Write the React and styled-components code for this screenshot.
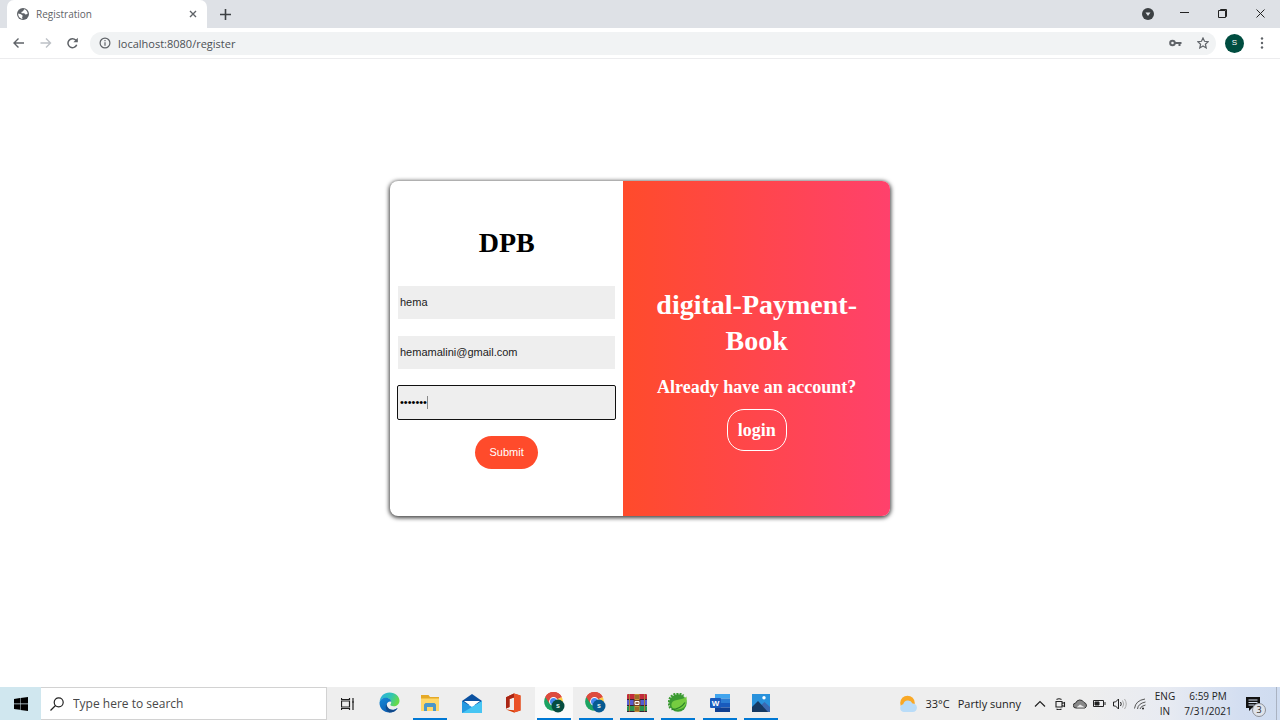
import React from "react";
import styled, { createGlobalStyle, css } from "styled-components";

const GlobalStyle = createGlobalStyle`
  *, *::before, *::after { box-sizing: border-box; }
  body { margin: 0; background: #fff; }
  button, input { font: inherit; color: inherit; }
  button { padding: 0; border: 0; background: none; }
  svg { display: block; flex: none; }
`;

const ui = `"Segoe UI", "Open Sans", "Noto Sans", sans-serif`;
const serif = `"Palatino Linotype", Palatino, "Liberation Serif", serif`;
const sans = `Arial, "Liberation Sans", sans-serif`;

const Screen = styled.div`
  display: flex;
  flex-direction: column;
  min-height: 100vh;
  font-family: ${ui};
`;

/* Browser chrome */
const TabStrip = styled.header`
  display: flex;
  align-items: stretch;
  height: 28px;
  padding-left: 7px;
  background: #dee1e6;
  color: #3c4043;
`;
const Tab = styled.div`
  display: flex;
  align-items: center;
  width: 200px;
  padding: 0 9px 0 10px;
  gap: 7px;
  border-radius: 7px 7px 0 0;
  background: #fff;
  font-size: 10px;
  color: #5f6368;
`;
const TabTitle = styled.span`
  flex: 1;
`;
const IconButton = styled.button`
  display: grid;
  place-items: center;
  width: ${(p) => p.$w || 27}px;
  color: ${(p) => p.$color || "inherit"};
`;
const WindowControls = styled.div`
  display: flex;
  margin-left: auto;
`;
const Toolbar = styled.nav`
  display: flex;
  align-items: center;
  height: 31px;
  padding: 0 5px;
  border-bottom: 1px solid #ececee;
  color: #5f6368;
`;
const AddressBar = styled.div`
  display: flex;
  flex: 1;
  align-items: center;
  height: 23px;
  margin: 0 5px 0 4px;
  padding-left: 9px;
  border-radius: 12px;
  background: #f1f3f4;
`;
const AddressInput = styled.input`
  flex: 1;
  min-width: 0;
  padding: 0 0 0 7px;
  border: 0;
  outline: 0;
  background: none;
  font-size: 11px;
  color: #4c5054;
`;
const Avatar = styled.span`
  display: grid;
  place-items: center;
  width: 19px;
  height: 19px;
  border-radius: 50%;
  background: #004d40;
  color: #fff;
  font: 8px/1 ${sans};
`;

/* Registration page */
const Page = styled.main`
  display: flex;
  flex: 1;
  align-items: flex-start;
  justify-content: center;
  padding: 122px 16px 32px;
`;
const Card = styled.section`
  display: grid;
  grid-template-columns: 7fr 8fr;
  width: 100%;
  max-width: 500px;
  min-height: 335px;
  overflow: hidden;
  border-radius: 8px;
  background: #fff;
  box-shadow: 0 1px 4px 1px rgba(0, 0, 0, 0.75);
`;
const Form = styled.form`
  display: flex;
  flex-direction: column;
  align-items: center;
  gap: 17px;
  padding: 44px 8px;
  font: 11px/13px ${sans};
`;
const Heading = styled.h1`
  margin: 0;
  font: bold 28px/36px ${serif};
`;
const Brand = styled(Heading)`
  padding-bottom: 8px;
  color: #000;
`;
const Field = styled.div`
  position: relative;
  width: 100%;
`;
const TextInput = styled.input`
  display: block;
  width: 100%;
  height: 33px;
  padding: 0 2px 2px;
  border: 0;
  background: #eee;
  color: #222;
  outline: none;
  ${(p) =>
    p.$active &&
    css`
      border-radius: 1px;
      outline: 1px solid #101010;
      color: #000;
    `}
`;
const Caret = styled.i`
  position: absolute;
  top: 10px;
  left: 29px;
  width: 1px;
  height: 13px;
  background: #888;
`;
const Submit = styled.button`
  width: 63px;
  height: 33px;
  border-radius: 17px;
  background: #ff4b2b;
  color: #fff;
`;
const Welcome = styled.aside`
  display: flex;
  flex-direction: column;
  align-items: center;
  padding: 106px 24px 32px;
  background: linear-gradient(to right, #ff4b2b, #ff416c);
  color: #fff;
  text-align: center;
`;
const Question = styled.p`
  margin: 16px 0 10px;
  font: bold 18px/24px ${serif};
  white-space: nowrap;
`;
const LoginLink = styled.a`
  padding: 8px 10px;
  border: 1px solid #fff;
  border-radius: 17px;
  color: inherit;
  font: bold 18px/24px ${serif};
  text-decoration: none;
`;

/* Taskbar */
const Taskbar = styled.footer`
  display: flex;
  align-items: stretch;
  height: 33px;
  background: linear-gradient(to right, #eee 85%, #e8ebf2 91%, #d3def1 97%, #cfdcf0);
  color: #222;
`;
const Start = styled.button`
  display: grid;
  place-items: center;
  width: 41px;
  background: #d0e7ef;
`;
const Search = styled.label`
  display: flex;
  align-items: center;
  gap: 9px;
  width: 286px;
  padding-left: 9px;
  border: 1px solid #d2d2d2;
  border-left: 0;
  background: #fff;
`;
const SearchInput = styled.input`
  flex: 1;
  min-width: 0;
  padding: 0;
  border: 0;
  outline: 0;
  background: none;
  font-size: 12px;
  &::placeholder { color: #484848; opacity: 1; }
`;
const Apps = styled.div`
  display: flex;
  justify-content: space-between;
  width: 406px;
  margin-left: 4px;
`;
const AppButton = styled.button`
  display: grid;
  place-items: center;
  width: 34px;
  border-bottom: 2px solid ${(p) => (p.$open ? "#0078d4" : "transparent")};
  background: ${(p) => (p.$active ? "#fafafa" : "none")};
  box-shadow: ${(p) => (p.$active ? "2px 0 #fafafa, -2px 0 #fafafa" : "none")};
`;
const Tray = styled.div`
  display: flex;
  align-items: center;
  margin-left: auto;
`;
const Weather = styled.button`
  display: flex;
  align-items: center;
  gap: 8px;
  margin-right: 10px;
  font-size: 11px;
  white-space: nowrap;
`;
const TrayIcons = styled.div`
  display: flex;
  align-items: center;
`;
const Stack = styled.div`
  display: flex;
  flex-direction: column;
  align-items: center;
  width: ${(p) => p.$w}px;
  font-size: 10px;
  line-height: 15px;
  white-space: nowrap;
`;
const Notices = styled.button`
  position: relative;
  display: grid;
  place-items: center;
  width: 40px;
  height: 33px;
  padding-right: 6px;
`;
const Count = styled.span`
  position: absolute;
  left: 16px;
  top: 16px;
  width: 14px;
  height: 14px;
  border: 1px solid #8d9097;
  border-radius: 50%;
  background: #dfe3ea;
  font-size: 9px;
  line-height: 12px;
`;
const ShowDesktop = styled.button`
  align-self: stretch;
  width: 4px;
  border-left: 1px solid #aab3c2;
`;

const Line = ({ s = 12, w = 1, children }) => (
  <svg width={s} height={s} viewBox={`0 0 ${s} ${s}`} fill="none" stroke="currentColor" strokeWidth={w} aria-hidden="true">
    {children}
  </svg>
);

const Globe = () => (
  <svg width="12" height="12" viewBox="0 0 12 12" aria-hidden="true">
    <circle cx="6" cy="6" r="6" fill="#5f6368" />
    <path d="M1.200 5.500 4 6.300l1.800 1.500-.7 1.400.4 1.700C3 10.600 1 8.500 1.200 5.500ZM7.200 1.300 6 3.200 4.300 3.900l.4 1.300h2.500l1.200 1.300 2.200-.6c.2-2.300-1.500-4.100-3.400-4.600Z" fill="#fff" />
  </svg>
);

const Chrome = ({ badge }) => (
  <svg width="21" height="21" viewBox="0 0 21 21" aria-hidden="true">
    <path d="M9.500 9.500 1.300 5A9.300 9.300 0 0 1 17.700 5Z" fill="#dd4b3e" />
    <path d="M9.500 9.500 1.300 5A9.300 9.300 0 0 0 9.500 18.800Z" fill="#1da362" />
    <path d="M9.500 9.500 17.700 5A9.300 9.300 0 0 1 9.500 18.800Z" fill="#ffcd46" />
    <path d="M9.500 5.300h8.400L17.700 5A9.300 9.300 0 0 0 1.300 5L5.500 11.800Z" fill="#dd4b3e" />
    <circle cx="9.500" cy="9.500" r="4.400" fill="#fff" />
    <circle cx="9.500" cy="9.500" r="3.500" fill="#4688f1" />
    <circle cx="14" cy="14" r="6.500" fill={badge} />
    <text x="14" y="16.300" textAnchor="middle" fontSize="7" fontWeight="bold" fontFamily="Liberation Sans, sans-serif" fill="#dcecea">s</text>
  </svg>
);

const Edge = () => (
  <svg width="21" height="21" viewBox="0 0 21 21" aria-hidden="true">
    <defs>
      <linearGradient id="edgeTop" x1="0" x2="1" y2=".4"><stop stopColor="#2aaee5" /><stop offset=".6" stopColor="#32c5b1" /><stop offset="1" stopColor="#66d94c" /></linearGradient>
      <linearGradient id="edgeBase" x2=".7" y2="1"><stop stopColor="#1589d8" /><stop offset="1" stopColor="#0c58ac" /></linearGradient>
    </defs>
    <path d="M.6 10C1 4 5.200.4 10.500.4c6 0 10 4 10 8.300 0 3.400-2.800 5.600-5.800 5.600-2.400 0-3.400-.8-3.400-1.500 0-.6.900-1 .9-2.600C12.200 7.500 9.500 6 6.500 6 3.200 6 1 8 .6 10Z" fill="url(#edgeTop)" />
    <path d="M.5 10.500C1 7.700 3.500 5.800 6.700 5.800c3.200 0 5.500 1.900 5.500 4.200-1.500-1.200-4.600.5-4.600 3.500 0 3.300 3.700 5.200 7 4.400 1.700-.4 3-1.100 4-1.900-1.700 3-4.700 4.500-8.200 4.500C4.700 20.500.3 16.300.5 10.500Z" fill="url(#edgeBase)" />
    <path d="M7.600 12c.2 3.500 3.500 6.700 8.200 5.400l2.900-1.500c-1.900 3-4.700 4.600-8.300 4.600-3.500-1.500-4.600-5.400-2.800-8.500Z" fill="#114a8b" />
  </svg>
);

const Folder = () => (
  <svg width="20" height="20" viewBox="0 0 20 20" aria-hidden="true">
    <path d="M1 2h7.500l1.500 2h9v13H1Z" fill="#e5a927" />
    <path d="M1 5.500h18V18H1Z" fill="#ffd869" />
    <path d="M4 11.500 5.500 10h9l1.500 1.500V18h-3v-4H7v4H4Z" fill="#4c97c8" />
  </svg>
);

const Mail = () => (
  <svg width="20" height="20" viewBox="0 0 20 20" aria-hidden="true">
    <path d="m0 8 10-7 10 7v4H0Z" fill="#0b51a0" />
    <path d="M2 8h16l-8 6Z" fill="#fff" />
    <path d="m0 8 10 6 10-6v12H0Z" fill="#2599e1" />
    <path d="M20 8v12H0Z" fill="#46c5f3" />
  </svg>
);

const Office = () => (
  <svg width="20" height="20" viewBox="0 0 20 20" aria-hidden="true">
    <path d="M3 4.300 11 .5l6.500 2v15L11 19.500l-8-3 8 .7V4.500L6.500 6v8L3 15.500Z" fill="#d83b01" />
    <path d="m11 .5 6.500 2v15l-6.500 2Z" fill="#ea5228" />
    <path d="M3 4.300 11 .5v4L6.500 6v8L3 15.500Z" fill="#a92515" />
  </svg>
);

const Archive = () => (
  <svg width="22" height="20" viewBox="0 0 22 20" aria-hidden="true">
    <rect x="1" y="1" width="20" height="6" rx="1" fill="#c22b3c" />
    <rect x="1" y="7" width="20" height="6" fill="#565bd0" />
    <rect x="1" y="13" width="20" height="6" rx="1" fill="#2a9550" />
    <path d="M1 6.500h20M1 12.500h20M1 18.500h20" stroke="#3b2033" />
    <path d="M3.500 1v17.500M18.500 1v17.500" stroke="#ae7c39" />
    <path d="M8.500 1h5v18h-5Z" fill="#c89437" />
    <path d="M7.500 7h7v6h-7Z" fill="#714127" />
    <path d="M9 8.500h4v3H9Z" fill="#9b6745" stroke="#fff" />
    <path d="M9 3h4M9 5h4M9 15h4M9 17h4" stroke="#70451d" />
  </svg>
);

const Spring = () => (
  <svg width="20" height="20" viewBox="0 0 20 20" aria-hidden="true">
    <circle cx="10" cy="10" r="8.700" fill="#3b9a32" />
    <path d="M2.500 15A9 9 0 0 1 15.500 2.800" fill="none" stroke="#3b9a32" strokeWidth="2.500" strokeDasharray="2 1" />
    <path d="M18.500 3.500c.7 7-1 12.500-8.500 13-5 .2-7.500-3-6.300-6.300C5.500 5.500 14 8 18.500 3.500Z" fill="#75cc40" />
    <path d="M3.500 16.500c6-.2 10.500-2.500 13.500-7" stroke="#2b8228" strokeWidth="1.300" fill="none" />
  </svg>
);

const Word = () => (
  <svg width="20" height="20" viewBox="0 0 20 20" aria-hidden="true">
    <path d="M5 1h15v4.500H5Z" fill="#41a5ee" /><path d="M5 5.500h15V10H5Z" fill="#2b7cd3" />
    <path d="M5 10h15v4.500H5Z" fill="#185abd" /><path d="M5 14.500h15V19H5Z" fill="#103f91" />
    <rect y="5" width="11" height="10" rx="1" fill="#185abd" />
    <text x="5.500" y="13" textAnchor="middle" fontWeight="bold" fontSize="8" fontFamily="Liberation Sans, sans-serif" fill="#fff">W</text>
  </svg>
);

const Photos = () => (
  <svg width="20" height="20" viewBox="0 0 20 20" aria-hidden="true">
    <path d="M1 1h18v18H1Z" fill="#2992dc" />
    <path d="m8 14 5.500-5 5.500 5v5H8Z" fill="#3b6ab2" />
    <path d="m1 14 6-6 10 11H1Z" fill="#153963" />
    <circle cx="13" cy="4.800" r="1.700" fill="#fff" />
  </svg>
);

const apps = [
  { name: "Edge", Icon: Edge },
  { name: "File Explorer", Icon: Folder, open: true },
  { name: "Mail", Icon: Mail },
  { name: "Office", Icon: Office },
  { name: "Chrome", Icon: () => <Chrome badge="#064d40" />, open: true, active: true },
  { name: "Chrome second profile", Icon: () => <Chrome badge="#075a91" />, open: true },
  { name: "WinRAR", Icon: Archive, open: true },
  { name: "Spring Tools", Icon: Spring, open: true },
  { name: "Word", Icon: Word, open: true },
  { name: "Photos", Icon: Photos, open: true },
];

const BrowserChrome = () => (
  <>
    <TabStrip>
      <Tab>
        <Globe />
        <TabTitle>Registration</TabTitle>
        <IconButton $w={10} aria-label="Close tab"><Line s={8} w={1.4}><path d="m1 1 6 6M7 1 1 7" /></Line></IconButton>
      </Tab>
      <IconButton $w={36} aria-label="New tab"><Line s={11} w={1.6}><path d="M5.500 0v11M0 5.500h11" /></Line></IconButton>
      <WindowControls>
        <IconButton $w={36} aria-label="Search tabs">
          <svg width="12" height="12" viewBox="0 0 12 12" aria-hidden="true"><circle cx="6" cy="6" r="6" fill="#3c4043" /><path d="M3.500 4.500h5L6 8Z" fill="#dee1e6" /></svg>
        </IconButton>
        <IconButton $w={38} $color="#222" aria-label="Minimize"><Line s={10}><path d="M0 3.500h9" /></Line></IconButton>
        <IconButton $w={38} $color="#222" aria-label="Restore"><Line s={10}><path d="M.5 1.500h7v7h-7ZM2.500 1V.5h6v7H8" /></Line></IconButton>
        <IconButton $w={38} $color="#222" aria-label="Close"><Line s={10}><path d="m.5.5 8 8M8.500.5l-8 8" /></Line></IconButton>
      </WindowControls>
    </TabStrip>
    <Toolbar>
      <IconButton aria-label="Back"><Line s={12} w={1.4}><path d="M11 6H1M5.500 1.500 1 6l4.500 4.500" /></Line></IconButton>
      <IconButton $color="#bdc1c6" aria-label="Forward"><Line s={12} w={1.4}><path d="M.5 6h10M6 1.500 10.500 6 6 10.500" /></Line></IconButton>
      <IconButton aria-label="Reload"><Line s={12} w={1.5}><path d="M9.700 7.800A4.500 4.500 0 1 1 8.700 3L10 4.300" /><path d="M10.800.8v4.400H6.400Z" fill="currentColor" stroke="none" /></Line></IconButton>
      <AddressBar>
        <Line s={12} w={1.2}><circle cx="6" cy="6" r="4.900" /><path d="M6 5.300v3.500M6 3v1.300" /></Line>
        <AddressInput type="text" aria-label="Address" defaultValue="localhost:8080/register" />
        <IconButton aria-label="Passwords">
          <svg width="13" height="8" viewBox="0 0 13 8" fill="none" stroke="currentColor" aria-hidden="true"><circle cx="3.500" cy="4" r="2.300" strokeWidth="2" /><path d="M6 4h6.500M10.500 4v3" strokeWidth="2" /></svg>
        </IconButton>
        <IconButton aria-label="Bookmark"><Line s={12} w={1.2}><path d="m6 1 1.500 3.300 3.700.4-2.800 2.500.8 3.700L6 9l-3.200 1.900.8-3.700L.8 4.700l3.700-.4Z" /></Line></IconButton>
      </AddressBar>
      <IconButton aria-label="Profile"><Avatar>S</Avatar></IconButton>
      <IconButton aria-label="Menu">
        <svg width="4" height="12" viewBox="0 0 4 12" fill="currentColor" aria-hidden="true"><circle cx="2" cy="1.500" r="1.200" /><circle cx="2" cy="6" r="1.200" /><circle cx="2" cy="10.500" r="1.200" /></svg>
      </IconButton>
    </Toolbar>
  </>
);

const Registration = () => (
  <Page>
    <Card>
      <Form onSubmit={(e) => e.preventDefault()}>
        <Brand>DPB</Brand>
        <Field><TextInput aria-label="Name" type="text" defaultValue="hema" /></Field>
        <Field><TextInput aria-label="Email" type="email" defaultValue="hemamalini@gmail.com" /></Field>
        <Field><TextInput $active aria-label="Password" type="password" defaultValue="hema123" /><Caret /></Field>
        <Submit type="submit">Submit</Submit>
      </Form>
      <Welcome>
        <Heading as="h2">digital-Payment-Book</Heading>
        <Question>Already have an account?</Question>
        <LoginLink href="#login">login</LoginLink>
      </Welcome>
    </Card>
  </Page>
);

const SystemTaskbar = () => (
  <Taskbar>
    <Start aria-label="Start">
      <svg width="14" height="14" viewBox="0 0 14 14" aria-hidden="true"><path d="m0 2 6-.9v5.500H0ZM6.500 1 14 0v6.600H6.500ZM0 7.200h6v5.600L0 12ZM6.500 7.200H14V14l-7.500-1.100Z" /></svg>
    </Start>
    <Search>
      <Line s={14} w={1.2}><circle cx="8.700" cy="5.300" r="4.500" /><path d="M5.500 8.500.5 13.500" /></Line>
      <SearchInput type="text" aria-label="Search" placeholder="Type here to search" />
    </Search>
    <IconButton $w={41} aria-label="Task view">
      <Line s={14} w={1.2}><path d="M.5 4h8v6h-8ZM.5 1v1.500h8V1M.5 13V11.500h8V13M12 1v12M11 5h2" /></Line>
    </IconButton>
    <Apps>
      {apps.map(({ name, Icon, open, active }) => (
        <AppButton key={name} aria-label={name} $open={open} $active={active}><Icon /></AppButton>
      ))}
    </Apps>
    <Tray>
      <Weather>
        <svg width="18" height="18" viewBox="0 0 18 18" aria-hidden="true">
          <circle cx="8.500" cy="8" r="7.300" fill="#f9a825" />
          <path d="M4.500 17a4 4 0 0 1-.3-7.800 5 5 0 0 1 9.300-.8A4.300 4.300 0 0 1 13.800 17Z" fill="#b9dcf8" />
        </svg>
        <span>33°C</span><span>Partly sunny</span>
      </Weather>
      <TrayIcons>
        <IconButton $w={18} aria-label="Show hidden icons"><Line s={12} w={1.2}><path d="m1 8.500 5-5 5 5" /></Line></IconButton>
        <IconButton $w={22} aria-label="Meet now"><Line s={12} w={1.1}><path d="M2 3.500h6v5.500H2ZM8 5.500l2.500-1v4L8 7.500M2.500 1.500Q5 0 7.500 1.500M2.500 11Q5 12.500 7.500 11" /></Line></IconButton>
        <IconButton $w={18} aria-label="OneDrive">
          <svg width="15" height="10" viewBox="0 0 15 10" aria-hidden="true"><path d="M3 9a2.500 2.500 0 0 1-.3-5A4.500 4.500 0 0 1 11 3.500 3 3 0 0 1 12 9Z" fill="#888" stroke="#333" /><path d="M3.500 8.500 7 5.500l5 3Z" fill="#e8e8e8" /></svg>
        </IconButton>
        <IconButton $w={21} aria-label="Battery"><Line s={13}><path d="M.5 3.500h10v6H.5ZM12 5v3" /><path d="M2 5h4v3H2Z" fill="currentColor" /></Line></IconButton>
        <IconButton $w={20} aria-label="Volume"><Line s={14}><path d="M.5 5h2l3-3v10l-3-3h-2ZM7.500 5q1.500 2 0 4" /><path d="M9.500 3.500q2.500 3.500 0 7M11.500 2q3.500 5 0 10" stroke="#aaa" /></Line></IconButton>
        <IconButton $w={20} aria-label="Network"><Line s={12}><path d="M.5 10.500Q1.500 2.500 11 1M3.500 11Q4 5.500 11.500 4M6 11Q6.500 8 11.500 7" stroke="#555" /><circle cx="9" cy="10.500" r="1" fill="currentColor" stroke="none" /></Line></IconButton>
      </TrayIcons>
      <Stack $w={30}><span>ENG</span><span>IN</span></Stack>
      <Stack $w={56}><span>6:59 PM</span><span>7/31/2021</span></Stack>
      <Notices aria-label="Notifications, 3 new">
        <svg width="14" height="14" viewBox="0 0 14 14" aria-hidden="true"><path d="M0 0h14v11H6l-3 3v-3H0Z" fill="#111" /><path d="M2.500 3h9M2.500 5.500h9M2.500 8h6" stroke="#d5dff0" /></svg>
        <Count>3</Count>
      </Notices>
      <ShowDesktop aria-label="Show desktop" />
    </Tray>
  </Taskbar>
);

export default function App() {
  return (
    <Screen>
      <GlobalStyle />
      <BrowserChrome />
      <Registration />
      <SystemTaskbar />
    </Screen>
  );
}
